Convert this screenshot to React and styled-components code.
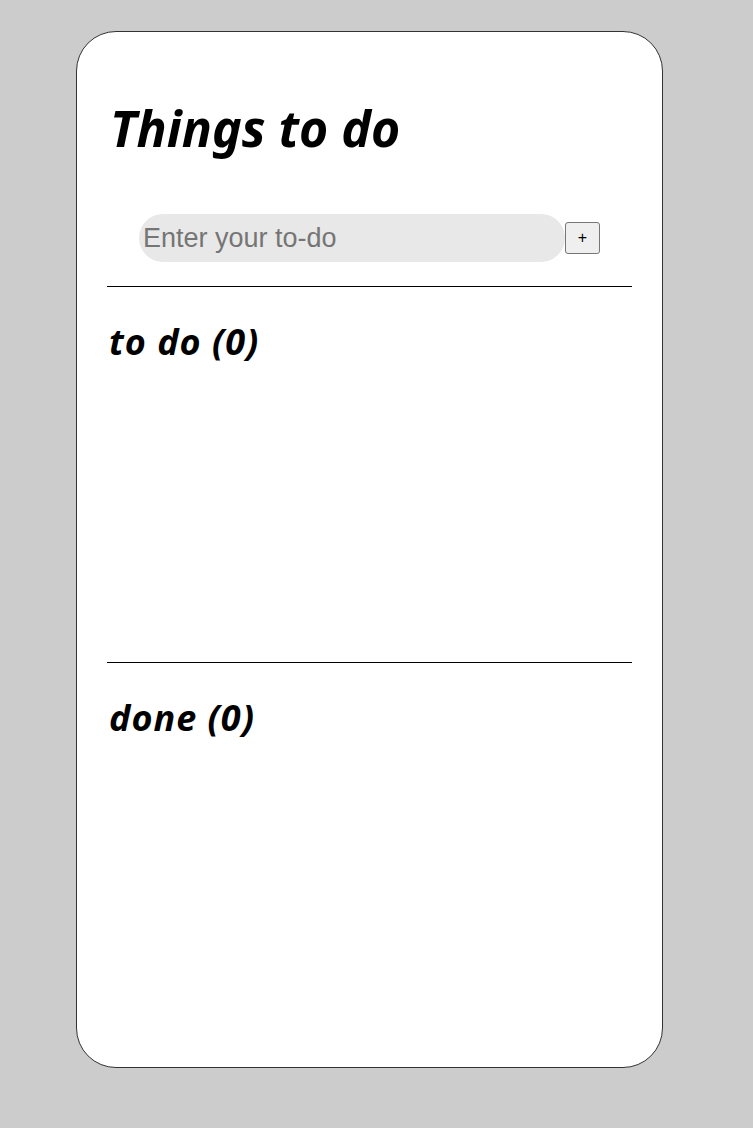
import React from "react";
import styled, { createGlobalStyle } from "styled-components";

const GlobalStyle = createGlobalStyle`
  body {
    margin: 0;
    background: #cccccc;
    font-family: "Noto Sans", sans-serif;
  }
`;

const Page = styled.div`
  padding: 31px 0 60px 76px;
`;

const Card = styled.div`
  width: 587px;
  height: 1037px;
  background: #fff;
  border: 1px solid #333;
  border-radius: 40px;
  padding: 0 30px;
  box-sizing: border-box;
  display: flex;
  flex-direction: column;
`;

const Title = styled.h1`
  font-size: 50px;
  font-weight: 700;
  font-style: italic;
  margin: 62px 0 0 3px;
  line-height: 68px;
`;

const InputRow = styled.div`
  display: flex;
  justify-content: center;
  align-items: center;
  margin-top: 52px;
  padding-bottom: 24px;
  border-bottom: 1px solid #000;
`;

const TodoInput = styled.input`
  width: 426px;
  height: 48px;
  box-sizing: border-box;
  border: none;
  outline: none;
  border-radius: 24px;
  background: #e8e8e8;
  padding: 0 4px;
  font-family: "Liberation Sans", Arial, sans-serif;
  font-size: 27px;
  &::placeholder {
    color: #757575;
  }
`;

const AddButton = styled.button`
  width: 35px;
  height: 32px;
  font-family: "Liberation Sans", Arial, sans-serif;
  font-size: 16px;
  background: #efefef;
  border: 1px solid #767676;
  border-radius: 3px;
  color: #000;
  padding: 0;
`;

const Section = styled.section`
  height: ${(p) => p.$height}px;
  border-bottom: ${(p) => (p.$divider ? "1px solid #000" : "none")};
`;

const SectionTitle = styled.h2`
  font-size: 36px;
  font-weight: 700;
  font-style: italic;
  letter-spacing: 1px;
  margin: 30px 0 0 2px;
  line-height: 50px;
`;

export default function App() {
  return (
    <>
      <GlobalStyle />
      <Page>
        <Card>
          <Title>Things to do</Title>
          <InputRow>
            <TodoInput placeholder="Enter your to-do" />
            <AddButton>+</AddButton>
          </InputRow>
          <Section $height={375} $divider>
            <SectionTitle>to do (0)</SectionTitle>
          </Section>
          <Section $height={400}>
            <SectionTitle>done (0)</SectionTitle>
          </Section>
        </Card>
      </Page>
    </>
  );
}
